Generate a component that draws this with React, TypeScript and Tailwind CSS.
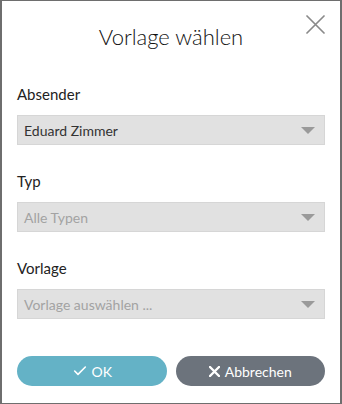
import { Check } from 'lucide-react';

const font = { fontFamily: 'Lato, "Noto Sans", sans-serif' };

function Caret() {
  return (
    <svg width="14" height="7" viewBox="0 0 14 7" className="shrink-0">
      <path d="M0 0 L14 0 L7 7 Z" fill="#9a9a9a" />
    </svg>
  );
}

function Cross({ size, stroke, color }: { size: number; stroke: number; color: string }) {
  return (
    <svg width={size} height={size} viewBox={`0 0 ${size} ${size}`} className="shrink-0">
      <path d={`M1 1 L${size - 1} ${size - 1} M${size - 1} 1 L1 ${size - 1}`} stroke={color} strokeWidth={stroke} strokeLinecap="round" />
    </svg>
  );
}

function Field({ label, value, muted }: { label: string; value: string; muted?: boolean }) {
  return (
    <div className="flex flex-col">
      <label className="text-[15px] leading-[20px] text-[#222]">{label}</label>
      <div className="mt-[11px] flex h-[30px] items-center justify-between border border-[#d6d6d6] bg-[#e1e1e1] pl-[6px] pr-[9px]">
        <span className={`text-[14px] ${muted ? 'text-[#a3a3a3]' : 'text-[#333]'}`}>{value}</span>
        <Caret />
      </div>
    </div>
  );
}

export default function App() {
  return (
    <div className="h-[404px] w-[342px] bg-white" style={font}>
      <div className="relative flex h-full flex-col border-x-2 border-y border-[#6e6e6e] px-[15px]">
        <button className="absolute right-[15px] top-[14px]">
          <Cross size={19} stroke={1.7} color="#8a8a8a" />
        </button>
        <h1 className="mt-[20px] text-center text-[22px] font-light leading-[32px] text-[#111]">Vorlage wählen</h1>
        <div className="mt-[31px] flex flex-col gap-[26px]">
          <Field label="Absender" value="Eduard Zimmer" />
          <Field label="Typ" value="Alle Typen" muted />
          <Field label="Vorlage" value="Vorlage auswählen ..." muted />
        </div>
        <div className="mt-[37px] flex gap-[9px]">
          <button className="flex h-[30px] flex-1 items-center justify-center gap-[4px] rounded-full bg-[#64b2c6] text-[14px] text-white">
            <Check size={16} strokeWidth={2.4} />
            OK
          </button>
          <button className="flex h-[30px] flex-1 items-center justify-center gap-[5px] rounded-full bg-[#6c737c] text-[14px] text-white">
            <Cross size={11} stroke={2.4} color="#fff" />
            Abbrechen
          </button>
        </div>
      </div>
    </div>
  );
}
